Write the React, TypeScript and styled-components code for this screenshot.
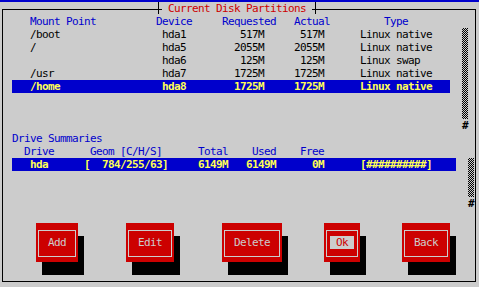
import React from 'react';
import styled, { createGlobalStyle, css } from 'styled-components';

const C = {
  gray: '#cccccc',
  blue: '#0000cc',
  yellow: '#ffff55',
  red: '#cc0000',
  black: '#000000',
};

const GlobalStyle = createGlobalStyle`
  html, body { margin: 0; padding: 0; background: ${C.gray}; }
  body {
    font-family: "DejaVu Sans Mono", "Liberation Mono", monospace;
    font-size: 11px;
  }
`;

const Screen = styled.div`
  width: 479px;
  height: 287px;
  overflow: hidden;
  background: ${C.gray};
  display: flex;
  flex-direction: column;
`;

const TopBar = styled.div`
  flex: none;
  height: 2px;
  background: ${C.blue};
`;

const Window = styled.section`
  position: relative;
  flex: none;
  box-sizing: border-box;
  margin: 7px 0 0 2px;
  width: 474px;
  height: 273px;
  border: 1px solid ${C.black};
  padding: 5px 0 0 3px;
`;

const Title = styled.div`
  position: absolute;
  top: -8px;
  left: 153px;
  height: 13px;
  display: flex;
`;

const Tee = styled.span<{ $offset: number }>`
  box-sizing: border-box;
  width: ${(p) => 6 - p.$offset}px;
  height: 12px;
  margin-left: ${(p) => p.$offset}px;
  border-left: 1px solid ${C.black};
`;

const Caption = styled.h1`
  margin: 0;
  width: 150px;
  height: 13px;
  background: ${C.gray};
  color: ${C.red};
  font-size: 11px;
  font-weight: normal;
  line-height: 13px;
  letter-spacing: -0.62px;
  white-space: pre;
`;

const Grid = styled.div`
  display: grid;
  grid-template-columns: repeat(78, 6px);
  grid-template-rows: repeat(20, 13px);
  line-height: 13px;
  letter-spacing: -0.62px;
  white-space: pre;
`;

type Pos = { $c: number; $r: number; $w?: number; $h?: number };

const place = css<Pos>`
  grid-column: ${(p) => p.$c} / span ${(p) => p.$w ?? 1};
  grid-row: ${(p) => p.$r + 1} / span ${(p) => p.$h ?? 1};
`;

const Heading = styled.span<Pos>`
  ${place};
  color: ${C.blue};
`;

const Cell = styled.span<Pos & { $selected?: boolean; $right?: boolean }>`
  ${place};
  color: ${(p) => (p.$selected ? C.yellow : C.black)};
  font-weight: ${(p) => (p.$selected ? 'bold' : 'normal')};
  text-align: ${(p) => (p.$right ? 'right' : 'left')};
`;

const SelectionBar = styled.div<Pos>`
  ${place};
  background: ${C.blue};
`;

const ScrollTrack = styled.div<Pos>`
  ${place};
  background-image: repeating-conic-gradient(${C.black} 0% 25%, ${C.gray} 0% 50%);
  background-size: 2px 2px;
`;

const ScrollThumb = styled.span<Pos>`
  ${place};
  color: ${C.black};
  font-weight: bold;
  text-align: center;
  letter-spacing: 0;
`;

const ButtonShadow = styled.div<Pos>`
  ${place};
  background: ${C.black};
`;

const Button = styled.div<Pos>`
  ${place};
  display: flex;
  background: ${C.red};
`;

const ButtonFrame = styled.div`
  flex: 1;
  margin: 7px 2px 5px 2px;
  border: 1px solid ${C.gray};
  display: flex;
  justify-content: center;
  align-items: flex-start;
  padding-top: 5px;
`;

const ButtonLabel = styled.span<{ $focused?: boolean; $cells: number }>`
  display: block;
  height: 13px;
  line-height: 13px;
  text-align: center;
  color: ${(p) => (p.$focused ? C.red : C.gray)};
  background: ${(p) => (p.$focused ? C.gray : 'transparent')};
  width: ${(p) => (p.$focused ? `${p.$cells * 6}px` : 'auto')};
`;

const partitions = [
  { mount: '/boot', dev: 'hda1', req: '517M', act: '517M', type: 'Linux native' },
  { mount: '/', dev: 'hda5', req: '2055M', act: '2055M', type: 'Linux native' },
  { mount: '', dev: 'hda6', req: '125M', act: '125M', type: 'Linux swap' },
  { mount: '/usr', dev: 'hda7', req: '1725M', act: '1725M', type: 'Linux native' },
  { mount: '/home', dev: 'hda8', req: '1725M', act: '1725M', type: 'Linux native', selected: true },
];

const buttons = [
  { label: 'Add', c: 6, w: 7 },
  { label: 'Edit', c: 21, w: 8 },
  { label: 'Delete', c: 37, w: 10 },
  { label: 'Ok', c: 54, w: 6, focused: true },
  { label: 'Back', c: 67, w: 8 },
];

export default function App() {
  return (
    <>
      <GlobalStyle />
      <Screen>
        <TopBar />
        <Window>
          <Title>
            <Tee $offset={2} />
            <Caption> Current Disk Partitions </Caption>
            <Tee $offset={3} />
          </Title>
          <Grid>
            <Heading $c={5} $r={0}>Mount Point</Heading>
            <Heading $c={26} $r={0}>Device</Heading>
            <Heading $c={37} $r={0}>Requested</Heading>
            <Heading $c={49} $r={0}>Actual</Heading>
            <Heading $c={64} $r={0}>Type</Heading>

            {partitions.map((p, i) => {
              const r = i + 1;
              const s = !!p.selected;
              return (
                <React.Fragment key={p.dev}>
                  {s && <SelectionBar $c={2} $r={r} $w={73} />}
                  <Cell $c={5} $r={r} $w={20} $selected={s}>{p.mount}</Cell>
                  <Cell $c={27} $r={r} $w={6} $selected={s}>{p.dev}</Cell>
                  <Cell $c={38} $r={r} $w={6} $right $selected={s}>{p.req}</Cell>
                  <Cell $c={48} $r={r} $w={6} $right $selected={s}>{p.act}</Cell>
                  <Cell $c={60} $r={r} $w={14} $selected={s}>{p.type}</Cell>
                </React.Fragment>
              );
            })}

            <ScrollTrack $c={77} $r={1} $h={7} />
            <ScrollThumb $c={77} $r={8}>#</ScrollThumb>

            <Heading $c={2} $r={9}>Drive Summaries</Heading>
            <Heading $c={4} $r={10}>Drive</Heading>
            <Heading $c={15} $r={10}>Geom [C/H/S]</Heading>
            <Heading $c={33} $r={10}>Total</Heading>
            <Heading $c={42} $r={10}>Used</Heading>
            <Heading $c={50} $r={10}>Free</Heading>

            <SelectionBar $c={2} $r={11} $w={74} />
            <Cell $c={5} $r={11} $w={3} $selected>hda</Cell>
            <Cell $c={14} $r={11} $w={14} $selected>{'[  784/255/63]'}</Cell>
            <Cell $c={33} $r={11} $w={5} $right $selected>6149M</Cell>
            <Cell $c={41} $r={11} $w={5} $right $selected>6149M</Cell>
            <Cell $c={50} $r={11} $w={4} $right $selected>0M</Cell>
            <Cell $c={60} $r={11} $w={12} $selected>[##########]</Cell>

            <ScrollTrack $c={78} $r={11} $h={3} />
            <ScrollThumb $c={78} $r={14}>#</ScrollThumb>

            {buttons.map((b) => (
              <React.Fragment key={b.label}>
                <ButtonShadow $c={b.c + 1} $r={17} $w={b.w} $h={3} />
                <Button $c={b.c} $r={16} $w={b.w} $h={3}>
                  <ButtonFrame>
                    <ButtonLabel $focused={b.focused} $cells={b.w - 2}>{b.label}</ButtonLabel>
                  </ButtonFrame>
                </Button>
              </React.Fragment>
            ))}
          </Grid>
        </Window>
      </Screen>
    </>
  );
}
